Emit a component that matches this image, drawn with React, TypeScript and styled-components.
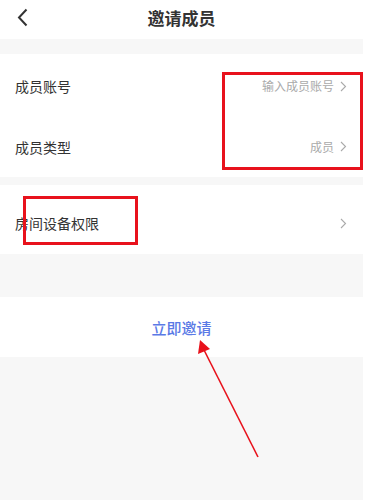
import React from 'react';
import styled, { createGlobalStyle } from 'styled-components';

const GlobalStyle = createGlobalStyle`
  html, body {
    margin: 0;
    padding: 0;
    background: #FFFFFF;
  }
  body {
    font-family: 'Noto Sans CJK SC', 'Noto Sans', sans-serif;
  }
`;

const Page = styled.div`
  position: relative;
  width: 363px;
  height: 500px;
  display: flex;
  flex-direction: column;
  background-color: #F7F7F7;
  overflow: hidden;
`;

const Header = styled.header`
  position: relative;
  display: flex;
  align-items: center;
  justify-content: center;
  height: 39px;
  padding-bottom: 4px;
  box-sizing: border-box;
  background-color: #FFFFFF;
`;

const BackButton = styled.button`
  position: absolute;
  left: 12px;
  top: 5px;
  width: 20px;
  height: 24px;
  padding: 0;
  border: none;
  background: none;
  display: flex;
  align-items: center;
  justify-content: center;
`;

const Title = styled.h1`
  margin: 0;
  font-size: 17px;
  font-weight: 600;
  color: #333333;
  line-height: 1;
`;

const Section = styled.section<{ gap: number }>`
  display: flex;
  flex-direction: column;
  background-color: #FFFFFF;
  margin-top: ${p => p.gap}px;
`;

const Row = styled.div<{ h: number; shift?: number }>`
  display: flex;
  align-items: center;
  justify-content: space-between;
  height: ${p => p.h}px;
  padding: ${p => p.shift ?? 0}px 16px 0 15px;
  box-sizing: border-box;
`;

const Label = styled.span`
  font-size: 14px;
  color: #333333;
  line-height: 1;
`;

const Value = styled.span`
  display: flex;
  align-items: center;
  gap: 6px;
  font-size: 12px;
  color: #AAAAAA;
  line-height: 1;
`;

const InviteButton = styled.button`
  height: 60px;
  width: 100%;
  border: none;
  background: #FFFFFF;
  font-family: inherit;
  font-size: 15px;
  font-weight: 500;
  color: #5B7AE6;
  padding: 0;
  cursor: pointer;
`;

const Mark = styled.div<{ x: number; y: number; w: number; h: number }>`
  position: absolute;
  left: ${p => p.x}px;
  top: ${p => p.y}px;
  width: ${p => p.w}px;
  height: ${p => p.h}px;
  border: 3px solid #E8121C;
  box-sizing: border-box;
  pointer-events: none;
`;

const ArrowLayer = styled.svg`
  position: absolute;
  left: 0;
  top: 0;
  pointer-events: none;
`;

const Chevron = () => (
  <svg width="7" height="11" viewBox="0 0 7 11" fill="none">
    <path d="M1 1L5.5 5.5L1 10" stroke="#AAAAAA" strokeWidth="1.1" />
  </svg>
);

const App: React.FC = () => (
  <>
    <GlobalStyle />
    <Page>
      <Header>
        <BackButton>
          <svg width="11" height="19" viewBox="0 0 11 19" fill="none">
            <path d="M9.5 1.5L2 9.5L9.5 17.5" stroke="#333333" strokeWidth="2" />
          </svg>
        </BackButton>
        <Title>邀请成员</Title>
      </Header>

      <Section gap={15}>
        <Row h={62} shift={2}>
          <Label>成员账号</Label>
          <Value>输入成员账号<Chevron /></Value>
        </Row>
        <Row h={61}>
          <Label>成员类型</Label>
          <Value>成员<Chevron /></Value>
        </Row>
      </Section>

      <Section gap={8}>
        <Row h={69} shift={7}>
          <Label>房间设备权限</Label>
          <Value><Chevron /></Value>
        </Row>
      </Section>

      <Section gap={43}>
        <InviteButton>立即邀请</InviteButton>
      </Section>

      <Mark x={222} y={72} w={141} h={98} />
      <Mark x={23} y={196} w={115} h={49} />
      <ArrowLayer width="363" height="500" viewBox="0 0 363 500">
        <line x1="258" y1="457" x2="204" y2="350" stroke="#E8121C" strokeWidth="1.6" />
        <polygon points="200,340 198,354 210,349" fill="#E8121C" />
      </ArrowLayer>
    </Page>
  </>
);

export default App;
